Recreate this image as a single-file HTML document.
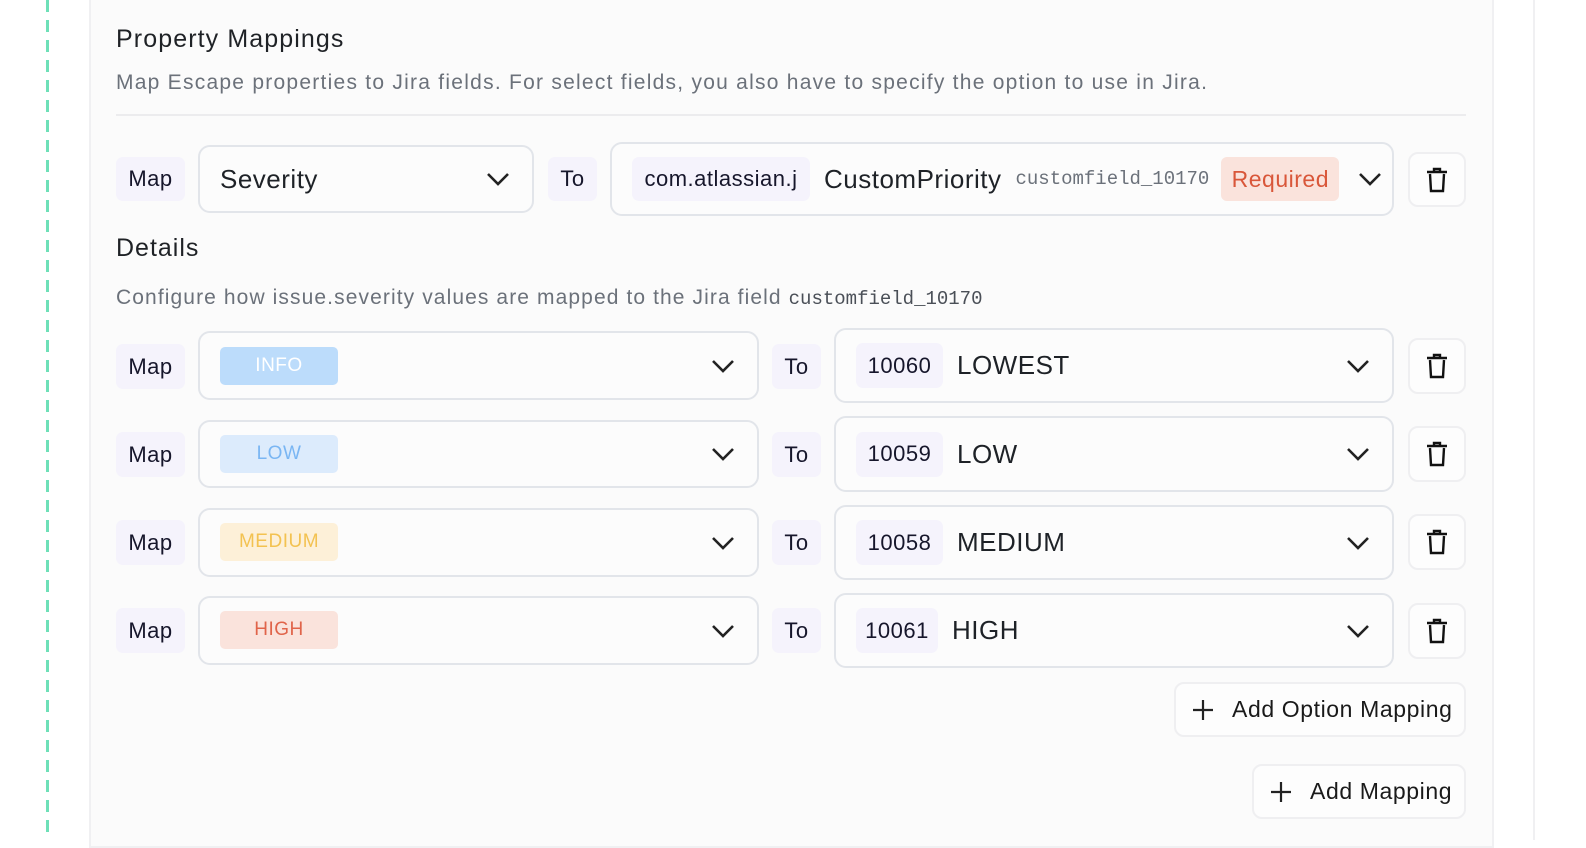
<!DOCTYPE html><html><head><style>
*{box-sizing:border-box;margin:0;padding:0}
body{width:1586px;height:840px;background:#fff;font-family:"Liberation Sans",sans-serif;position:relative;overflow:hidden;color:#1e2227;letter-spacing:0.5px}
.a{position:absolute}
.dash{left:46px;top:0;width:3px;height:840px;background:repeating-linear-gradient(#6ee0b8 0 12px,transparent 12px 20px)}
.card{left:89px;top:-2px;width:1405px;height:850px;background:#fbfbfb;border:2px solid #f0f0f2}
.vr{left:1533px;top:0;width:2px;height:840px;background:#f0f0f2}
.chip{background:#f5f3fc;border-radius:7px;display:flex;align-items:center;justify-content:center;font-size:22px;color:#16162b}
.sel{border:2px solid #e2e5ea;border-radius:12px;background:#fcfcfc;display:flex;align-items:center}
.chev{position:absolute;right:22px;top:50%;margin-top:-8px}
.trash{width:58px;border:2px solid #efeff1;border-radius:10px;background:#fdfdfd;display:flex;align-items:center;justify-content:center}
.badge{position:absolute;left:20px;top:14px;width:118px;height:38px;border-radius:5px;display:flex;align-items:center;justify-content:center;font-size:19px}
.btn{border:2px solid #efeff1;border-radius:10px;background:#fdfdfd;display:flex;align-items:center;font-size:23px;color:#1a1a1a;padding-left:16px;letter-spacing:0.6px}
.mono{font-family:"Liberation Mono",monospace;letter-spacing:0}
</style></head><body>
<div class="a dash"></div>
<div class="a card"></div>
<div class="a vr"></div>
<div class="a" style="left:116px;top:25px;font-size:25px;color:#1f2226;letter-spacing:1.1px">Property Mappings</div>
<div class="a" style="left:116px;top:71px;font-size:21px;color:#6b717a;letter-spacing:1.25px">Map Escape properties to Jira fields. For select fields, you also have to specify the option to use in Jira.</div>
<div class="a" style="left:116px;top:114px;width:1350px;height:2px;background:#ececee"></div>

<div class="a chip" style="left:116px;top:157px;width:69px;height:44px">Map</div>
<div class="a sel" style="left:198px;top:145px;width:336px;height:68px;padding-left:20px;font-size:26px">Severity<svg class="chev" width="24" height="16" viewBox="0 0 24 16"><path d="M2 3l10 10 10-10" fill="none" stroke="#222" stroke-width="2.6"/></svg></div>
<div class="a chip" style="left:548px;top:157px;width:49px;height:44px">To</div>
<div class="a sel" style="left:610px;top:142px;width:784px;height:74px;padding-left:20px">
<div class="chip" style="width:178px;height:44px;font-size:22px">com.atlassian.j</div>
<span style="font-size:26px;margin-left:14px">CustomPriority</span>
<span class="mono" style="font-size:19px;color:#6b717a;margin-left:14px">customfield_10170</span>
<span style="background:#fae3dc;color:#d9573a;font-size:23px;height:44px;width:118px;border-radius:6px;margin-left:12px;display:flex;align-items:center;justify-content:center">Required</span>
<svg class="chev" style="right:10px" width="24" height="16" viewBox="0 0 24 16"><path d="M2 3l10 10 10-10" fill="none" stroke="#222" stroke-width="2.6"/></svg></div>
<div class="a trash" style="left:1408px;top:152px;height:55px"><svg width="22" height="26" viewBox="0 0 22 26"><path d="M1 5h20M8 5V2h6v3M4 7l1 17h12l1-17" fill="none" stroke="#111" stroke-width="2.4"/></svg></div>

<div class="a" style="left:116px;top:234px;font-size:25px;color:#1f2226;letter-spacing:1px">Details</div>
<div class="a" style="left:116px;top:286px;font-size:21px;color:#6b717a;letter-spacing:1.1px">Configure how issue.severity values are mapped to the Jira field <span class="mono" style="font-size:19px;color:#4a4f57">customfield_10170</span></div>

<div class="a chip" style="left:116px;top:344px;width:69px;height:45px">Map</div>
<div class="a sel" style="left:198px;top:331px;width:561px;height:69px"><div class="badge" style="top:14px;background:#bcdcfb;color:#fff">INFO</div><svg class="chev" width="24" height="16" viewBox="0 0 24 16"><path d="M2 3l10 10 10-10" fill="none" stroke="#222" stroke-width="2.6"/></svg></div>
<div class="a chip" style="left:772px;top:344px;width:49px;height:45px">To</div>
<div class="a sel" style="left:834px;top:328px;width:560px;height:75px;padding-left:20px"><div class="chip" style="width:87px;height:45px">10060</div><span style="font-size:26px;margin-left:14px">LOWEST</span><svg class="chev" width="24" height="16" viewBox="0 0 24 16"><path d="M2 3l10 10 10-10" fill="none" stroke="#222" stroke-width="2.6"/></svg></div>
<div class="a trash" style="left:1408px;top:338px;height:56px"><svg width="22" height="26" viewBox="0 0 22 26"><path d="M1 5h20M8 5V2h6v3M4 7l1 17h12l1-17" fill="none" stroke="#111" stroke-width="2.4"/></svg></div>

<div class="a chip" style="left:116px;top:432px;width:69px;height:45px">Map</div>
<div class="a sel" style="left:198px;top:420px;width:561px;height:68px"><div class="badge" style="top:13px;background:#dcebfc;color:#7ab6f3">LOW</div><svg class="chev" width="24" height="16" viewBox="0 0 24 16"><path d="M2 3l10 10 10-10" fill="none" stroke="#222" stroke-width="2.6"/></svg></div>
<div class="a chip" style="left:772px;top:432px;width:49px;height:45px">To</div>
<div class="a sel" style="left:834px;top:416px;width:560px;height:76px;padding-left:20px"><div class="chip" style="width:87px;height:45px">10059</div><span style="font-size:26px;margin-left:14px">LOW</span><svg class="chev" width="24" height="16" viewBox="0 0 24 16"><path d="M2 3l10 10 10-10" fill="none" stroke="#222" stroke-width="2.6"/></svg></div>
<div class="a trash" style="left:1408px;top:426px;height:56px"><svg width="22" height="26" viewBox="0 0 22 26"><path d="M1 5h20M8 5V2h6v3M4 7l1 17h12l1-17" fill="none" stroke="#111" stroke-width="2.4"/></svg></div>

<div class="a chip" style="left:116px;top:520px;width:69px;height:45px">Map</div>
<div class="a sel" style="left:198px;top:508px;width:561px;height:69px"><div class="badge" style="top:13px;background:#fdf0d8;color:#f3c251">MEDIUM</div><svg class="chev" width="24" height="16" viewBox="0 0 24 16"><path d="M2 3l10 10 10-10" fill="none" stroke="#222" stroke-width="2.6"/></svg></div>
<div class="a chip" style="left:772px;top:520px;width:49px;height:45px">To</div>
<div class="a sel" style="left:834px;top:505px;width:560px;height:75px;padding-left:20px"><div class="chip" style="width:87px;height:45px">10058</div><span style="font-size:26px;margin-left:14px">MEDIUM</span><svg class="chev" width="24" height="16" viewBox="0 0 24 16"><path d="M2 3l10 10 10-10" fill="none" stroke="#222" stroke-width="2.6"/></svg></div>
<div class="a trash" style="left:1408px;top:514px;height:56px"><svg width="22" height="26" viewBox="0 0 22 26"><path d="M1 5h20M8 5V2h6v3M4 7l1 17h12l1-17" fill="none" stroke="#111" stroke-width="2.4"/></svg></div>

<div class="a chip" style="left:116px;top:608px;width:69px;height:45px">Map</div>
<div class="a sel" style="left:198px;top:596px;width:561px;height:69px"><div class="badge" style="top:13px;background:#fae3dc;color:#e0644a">HIGH</div><svg class="chev" width="24" height="16" viewBox="0 0 24 16"><path d="M2 3l10 10 10-10" fill="none" stroke="#222" stroke-width="2.6"/></svg></div>
<div class="a chip" style="left:772px;top:608px;width:49px;height:45px">To</div>
<div class="a sel" style="left:834px;top:593px;width:560px;height:75px;padding-left:20px"><div class="chip" style="width:82px;height:45px">10061</div><span style="font-size:26px;margin-left:14px">HIGH</span><svg class="chev" width="24" height="16" viewBox="0 0 24 16"><path d="M2 3l10 10 10-10" fill="none" stroke="#222" stroke-width="2.6"/></svg></div>
<div class="a trash" style="left:1408px;top:603px;height:56px"><svg width="22" height="26" viewBox="0 0 22 26"><path d="M1 5h20M8 5V2h6v3M4 7l1 17h12l1-17" fill="none" stroke="#111" stroke-width="2.4"/></svg></div>

<div class="a btn" style="left:1174px;top:682px;width:292px;height:55px"><svg width="22" height="22" viewBox="0 0 22 22"><path d="M11 1v20M1 11h20" stroke="#222" stroke-width="2.2"/></svg><span style="margin-left:18px">Add Option Mapping</span></div>
<div class="a btn" style="left:1252px;top:764px;width:214px;height:55px"><svg width="22" height="22" viewBox="0 0 22 22"><path d="M11 1v20M1 11h20" stroke="#222" stroke-width="2.2"/></svg><span style="margin-left:18px">Add Mapping</span></div>
</body></html>
